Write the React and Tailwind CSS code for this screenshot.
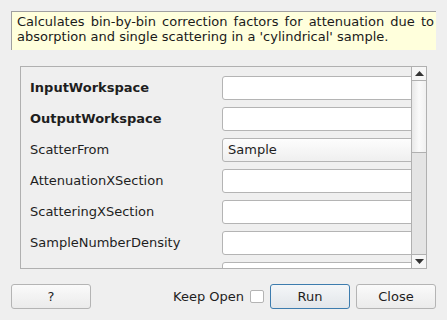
import React from 'react';

const rows = [
  { label: 'InputWorkspace', bold: true },
  { label: 'OutputWorkspace', bold: true },
  { label: 'ScatterFrom', combo: 'Sample' },
  { label: 'AttenuationXSection' },
  { label: 'ScatteringXSection' },
  { label: 'SampleNumberDensity' },
  { label: '' },
];

const PropRow = ({ label, bold, combo }) => (
  <div className="flex items-center h-[24px] mb-[7px]">
    <div className={`w-[201px] shrink-0 pl-[9px] text-[13px] text-[#1e1e1e] ${bold ? 'font-bold' : ''}`}>{label}</div>
    {combo ? (
      <div className="flex-1 mr-[-4px] h-[24px] rounded-[3px] border border-[#b4b4b4] bg-gradient-to-b from-[#fdfdfd] to-[#efefef] pl-[5px] flex items-center text-[13px] text-[#1e1e1e]">
        {combo}
      </div>
    ) : (
      <div className="flex-1 mr-[-4px] h-[24px] rounded-[3px] border border-[#b4b4b4] bg-white" />
    )}
  </div>
);

const Btn = ({ children, primary, className }) => (
  <button
    className={`h-[25px] rounded-[3px] border text-[13px] text-[#1e1e1e] bg-gradient-to-b ${
      primary ? 'border-[#3d7cae] from-[#f4f6f8] to-[#e2e6ea]' : 'border-[#b4b4b4] from-[#fafafa] to-[#ebebeb]'
    } ${className}`}
  >
    {children}
  </button>
);

export default function App() {
  return (
    <div
      className="w-[447px] h-[320px] bg-[#efefef] overflow-hidden"
      style={{ fontFamily: '"DejaVu Sans", sans-serif' }}
    >
      <div className="pt-[11px] px-[11px]">
        <div className="h-[39px] bg-[#ffffdc] border-t border-l border-[#a0a0a0] pl-[5px] pr-[2px] pt-[2px] text-[13px] leading-[15px] text-[#1a1a1a] text-justify [text-align-last:left]">
          Calculates bin-by-bin correction factors for attenuation due to absorption and single scattering in a 'cylindrical' sample.
        </div>
      </div>

      <div className="mt-[16px] ml-[20px] w-[407px] h-[203px] border border-[#b0b0b0] flex overflow-hidden">
        <div className="flex-1 pt-[9px] overflow-hidden">
          {rows.map((r, i) => (
            <PropRow key={i} {...r} />
          ))}
        </div>
        <div className="w-[15px] flex flex-col border-l border-[#b0b0b0]">
          <div className="h-[14px] bg-[#f6f6f6] border-b border-[#b0b0b0] flex items-center justify-center">
            <svg width="9" height="5" viewBox="0 0 9 5"><path d="M0 5 L4.5 0 L9 5 Z" fill="#333" /></svg>
          </div>
          <div className="h-[72px] bg-gradient-to-r from-[#e8e8e8] via-[#fafafa] to-[#f0f0f0] border-b border-[#b0b0b0]" />
          <div className="flex-1 bg-[#e4e4e4]" />
          <div className="h-[14px] bg-[#f6f6f6] border-t border-[#b0b0b0] flex items-center justify-center">
            <svg width="9" height="5" viewBox="0 0 9 5"><path d="M0 0 L4.5 5 L9 0 Z" fill="#333" /></svg>
          </div>
        </div>
      </div>

      <div className="mt-[15px] px-[11px] flex items-center">
        <Btn className="w-[80px]">?</Btn>
        <div className="flex-1" />
        <span className="text-[13px] text-[#1e1e1e] mr-[6px]">Keep Open</span>
        <div className="w-[14px] h-[13px] bg-white border border-[#b4b4b4] rounded-[2px] mr-[6px]" />
        <Btn primary className="w-[80px]">Run</Btn>
        <Btn className="w-[80px] ml-[6px]">Close</Btn>
      </div>
    </div>
  );
}
